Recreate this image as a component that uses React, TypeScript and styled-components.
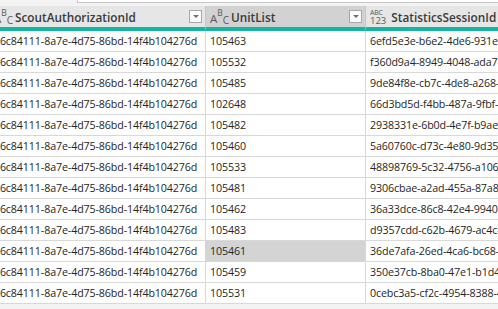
import React from "react";
import styled, { createGlobalStyle } from "styled-components";

const GlobalStyle = createGlobalStyle`
  html, body {
    margin: 0;
    padding: 0;
    background: #f3f3f3;
  }
  body {
    font-family: "Open Sans", "Noto Sans", "Liberation Sans", sans-serif;
  }
`;

type Col = { name: string; type: "text" | "any"; width: number; selected?: boolean };

const columns: Col[] = [
  { name: "ScoutAuthorizationId", type: "text", width: 216 },
  { name: "UnitList", type: "text", width: 160, selected: true },
  { name: "StatisticsSessionId", type: "any", width: 220 },
];

const authId = "e6c84111-8a7e-4d75-86bd-14f4b104276d";

const rows: [string, string][] = [
  ["105463", "6efd5e3e-b6e2-4de6-931e-3c1b0a8e42f7"],
  ["105532", "f360d9a4-8949-4048-ada7-2e9b6c1d5a30"],
  ["105485", "9de84f8e-cb7c-4de8-a268-71f0b3e9c4d2"],
  ["102648", "66d3bd5d-f4bb-487a-9fbf-0a5c7d2e81b9"],
  ["105482", "2938331e-6b0d-4e7f-b9ae-5d4c3b2a1f08"],
  ["105460", "5a60760c-d73c-4e80-9d35-8e7f6a5b4c3d"],
  ["105533", "48898769-5c32-4756-a106-9f8e7d6c5b4a"],
  ["105481", "9306cbae-a2ad-455a-87a8-1b2c3d4e5f60"],
  ["105462", "36a33dce-86c8-42e4-9940-6a7b8c9d0e1f"],
  ["105483", "d9357cdd-c62b-4679-ac4c-2f3e4d5c6b7a"],
  ["105461", "36de7afa-26ed-4ca6-bc68-0c1d2e3f4a5b"],
  ["105459", "350e37cb-8ba0-47e1-b1d4-7e6f5a4b3c2d"],
  ["105531", "0cebc3a5-cf2c-4954-8388-4d5e6f7a8b9c"],
];

const selectedRow = 10;

export default function App() {
  return (
    <>
      <GlobalStyle />
      <Page>
        <TopStrip>
          <FormulaEdge />
        </TopStrip>
        <Viewport>
          <Grid $cols={columns.map((c) => `${c.width}px`).join(" ")}>
            {columns.map((c) => (
              <HeaderCell key={c.name} $selected={c.selected}>
                {c.type === "text" ? (
                  <TextType>
                    <Big>A</Big>
                    <Sup>B</Sup>
                    <Sub>C</Sub>
                  </TextType>
                ) : (
                  <AnyType>
                    <Top>ABC</Top>
                    <Bottom>123</Bottom>
                  </AnyType>
                )}
                <HeaderLabel>{c.name}</HeaderLabel>
                <Dropdown />
              </HeaderCell>
            ))}
            {rows.map(([unit, session], i) => (
              <React.Fragment key={i}>
                <Cell>{authId}</Cell>
                <Cell $highlight={i === selectedRow}>{unit}</Cell>
                <Cell>{session}</Cell>
              </React.Fragment>
            ))}
          </Grid>
        </Viewport>
      </Page>
    </>
  );
}

const Page = styled.div`
  width: 498px;
  height: 309px;
  overflow: hidden;
  display: flex;
  flex-direction: column;
  background: #f3f3f3;
`;

const TopStrip = styled.div`
  height: 6px;
  flex-shrink: 0;
`;

const FormulaEdge = styled.div`
  margin-left: 77px;
  height: 2px;
  background: #ffffff;
  border-left: 1px solid #c8c8c8;
  border-bottom: 1px solid #c8c8c8;
`;

const Viewport = styled.div`
  flex: 1;
  overflow: hidden;
`;

const Grid = styled.div<{ $cols: string }>`
  display: grid;
  grid-template-columns: ${(p) => p.$cols};
  grid-template-rows: 25px;
  grid-auto-rows: 21px;
  margin-left: -10px;
  width: max-content;
`;

const HeaderCell = styled.div<{ $selected?: boolean }>`
  display: flex;
  align-items: center;
  box-sizing: border-box;
  padding: 0 3px 0 4px;
  background: ${(p) => (p.$selected ? "#d2d2d2" : "#e6e6e6")};
  border-right: 1px solid #c6c6c6;
  border-bottom: 4px solid #12b5a6;
`;

const TextType = styled.div`
  display: flex;
  align-items: flex-start;
  width: 17px;
  height: 15px;
  margin-right: 4px;
  color: #5a5a5a;
  font-family: "Open Sans", sans-serif;
  line-height: 1;
  flex-shrink: 0;
`;

const Big = styled.span`
  font-size: 11.5px;
  margin-top: 4px;
`;

const Sup = styled.span`
  font-size: 8.5px;
`;

const Sub = styled.span`
  font-size: 10px;
  margin-top: 6px;
`;

const AnyType = styled.div`
  display: flex;
  flex-direction: column;
  margin-right: 5px;
  color: #5a5a5a;
  flex-shrink: 0;
`;

const Top = styled.span`
  font-size: 7px;
  line-height: 7px;
  letter-spacing: -0.2px;
`;

const Bottom = styled.span`
  font-size: 9.5px;
  line-height: 9px;
`;

const HeaderLabel = styled.span`
  font-size: 11.8px;
  font-weight: 600;
  color: #3a3a3a;
  white-space: nowrap;
`;

const Dropdown = styled.div`
  margin-left: auto;
  width: 13px;
  height: 13px;
  box-sizing: border-box;
  border: 1px solid #a8a8a8;
  background: #fbfbfb;
  display: flex;
  align-items: center;
  justify-content: center;
  flex-shrink: 0;

  &::after {
    content: "";
    border-left: 3px solid transparent;
    border-right: 3px solid transparent;
    border-top: 3px solid #707070;
  }
`;

const Cell = styled.div<{ $highlight?: boolean }>`
  box-sizing: border-box;
  padding: 0 4px;
  display: flex;
  align-items: center;
  font-size: 10.7px;
  letter-spacing: -0.12px;
  color: #252525;
  white-space: nowrap;
  overflow: hidden;
  background: ${(p) => (p.$highlight ? "#d4d4d4" : "#ffffff")};
  border-right: 1px solid #d8d8d8;
  border-bottom: 1px solid #d8d8d8;
`;
